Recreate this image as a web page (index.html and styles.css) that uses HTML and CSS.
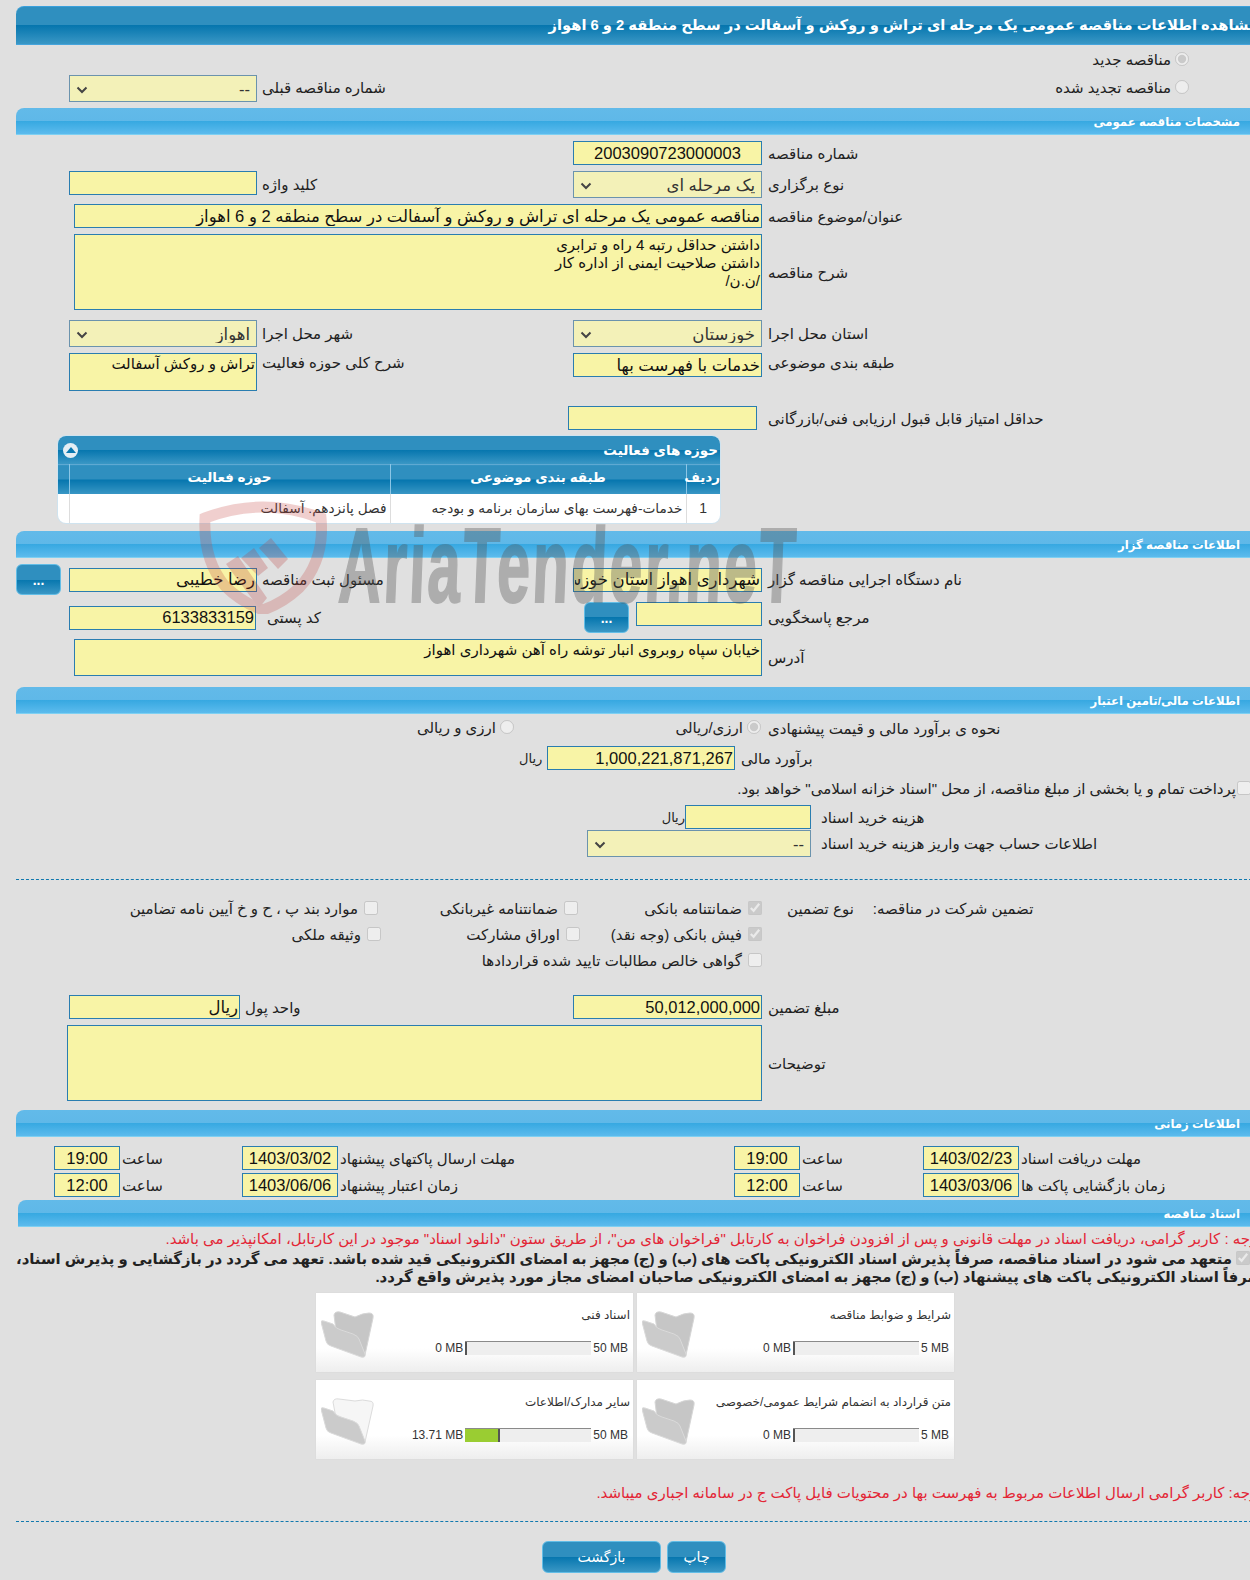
FILE: index.html
```html
<!DOCTYPE html>
<html lang="fa">
<head>
  <meta charset="UTF-8">
  <title>مشاهده اطلاعات مناقصه</title>
  <link rel="stylesheet" href="styles.css">
</head>
<body>
<div class="page">
  <h1 class="title-bar">مشاهده اطلاعات مناقصه عمومی یک مرحله ای تراش و روکش و آسفالت در سطح منطقه 2 و 6 اهواز</h1>

  <div class="row mt3 h24">
    <label class="choice c-d pr-radio"><input type="radio" name="kind" checked disabled>مناقصه جدید</label>
  </div>
  <div class="row mt3 h33">
    <select class="field c-a sel align-top" disabled><option>--</option></select>
    <span class="lbl c-b top-lbl">شماره مناقصه قبلی</span>
    <label class="choice c-d pr-radio top-lbl"><input type="radio" name="kind" disabled>مناقصه تجدید شده</label>
  </div>

  <h2 class="section-bar">مشخصات مناقصه عمومی</h2>

  <div class="row mt6">
    <input class="field c-c center" value="2003090723000003" readonly>
    <span class="lbl c-d">شماره مناقصه</span>
  </div>
  <div class="row mt6">
    <input class="field c-a align-top" readonly>
    <span class="lbl c-b">کلید واژه</span>
    <select class="field c-c sel" disabled><option>یک مرحله ای</option></select>
    <span class="lbl c-d">نوع برگزاری</span>
  </div>
  <div class="row mt6">
    <input class="field c-wide" dir="rtl" value="مناقصه عمومی یک مرحله ای تراش و روکش و آسفالت در سطح منطقه 2 و 6 اهواز" readonly>
    <span class="lbl c-d">عنوان/موضوع مناقصه</span>
  </div>
  <div class="row mt6">
    <textarea class="field c-wide area-lg" dir="rtl" readonly>داشتن حداقل رتبه 4 راه و ترابری
داشتن صلاحیت ایمنی از اداره کار
/ن.ن/</textarea>
    <span class="lbl c-d">شرح مناقصه</span>
  </div>
  <div class="row mt10">
    <select class="field c-a sel" disabled><option>اهواز</option></select>
    <span class="lbl c-b">شهر محل اجرا</span>
    <select class="field c-c sel" disabled><option>خوزستان</option></select>
    <span class="lbl c-d">استان محل اجرا</span>
  </div>
  <div class="row mt6">
    <textarea class="field c-a area-sm" dir="rtl" readonly>تراش و روکش آسفالت</textarea>
    <span class="lbl c-b top-lbl-sm">شرح کلی حوزه فعالیت</span>
    <input class="field c-c align-top" dir="rtl" value="خدمات با فهرست بها" readonly>
    <span class="lbl c-d top-lbl-sm">طبقه بندی موضوعی</span>
  </div>
  <div class="row mt15">
    <input class="field c-c shift-left" readonly>
    <span class="lbl c-d">حداقل امتیاز قابل قبول ارزیابی فنی/بازرگانی</span>
  </div>

  <div class="activity">
    <div class="activity-head">
      <span class="collapse-btn"><svg width="10" height="6" viewBox="0 0 10 6"><path d="M0 6 L5 0 L10 6 Z" fill="#0a78b0"/></svg></span>
      <span>حوزه های فعالیت</span>
    </div>
    <table class="activity-table" dir="rtl">
      <thead>
        <tr><th class="col-idx">ردیف</th><th class="col-cat">طبقه بندی موضوعی</th><th>حوزه فعالیت</th><th class="col-end"></th></tr>
      </thead>
      <tbody>
        <tr><td class="col-idx center num">1</td><td>خدمات-فهرست بهای سازمان برنامه و بودجه</td><td>فصل پانزدهم. آسفالت</td><td class="col-end"></td></tr>
      </tbody>
    </table>
  </div>

  <h2 class="section-bar mt8">اطلاعات مناقصه گزار</h2>

  <div class="row mt6 center-row">
    <button class="btn btn-dots c-z" type="button">...</button>
    <input class="field c-a" dir="rtl" value="رضا خطیبی" readonly>
    <span class="lbl c-b">مسئول ثبت مناقصه</span>
    <input class="field c-c" dir="rtl" value="شهرداری اهواز استان خوزستان" readonly>
    <span class="lbl c-d">نام دستگاه اجرایی مناقصه گزار</span>
  </div>
  <div class="row mt7 ref-row">
    <input class="field c-a num code-input" value="6133833159" readonly>
    <span class="lbl c-b pl-code">کد پستی</span>
    <div class="c-c ref-cell">
      <button class="btn btn-dots" type="button">...</button>
      <input class="field ref-input" readonly>
    </div>
    <span class="lbl c-d">مرجع پاسخگویی</span>
  </div>
  <div class="row mt6">
    <textarea class="field c-wide area-md" dir="rtl" readonly>خیابان سپاه روبروی انبار توشه راه آهن شهرداری اهواز</textarea>
    <span class="lbl c-d">آدرس</span>
  </div>

  <h2 class="section-bar mt11">اطلاعات مالی/تامین اعتبار</h2>

  <div class="row mt2 h24">
    <label class="choice c-b pr-second"><input type="radio" name="est" disabled>ارزی و ریالی</label>
    <label class="choice c-c pr-first"><input type="radio" name="est" checked disabled>ارزی/ریالی</label>
    <span class="lbl c-d">نحوه ی برآورد مالی و قیمت پیشنهادی</span>
  </div>
  <div class="flex-row estimate-row mt6">
    <span class="unit">ریال</span>
    <input class="field estimate-input num" value="1,000,221,871,267" readonly>
    <span class="lbl">برآورد مالی</span>
  </div>
  <label class="treasury-line"><input type="checkbox" disabled>پرداخت تمام و یا بخشی از مبلغ مناقصه، از محل "اسناد خزانه اسلامی" خواهد بود.</label>
  <div class="flex-row cost-row mt7">
    <span class="unit">ریال</span>
    <input class="field cost-input" readonly>
    <span class="lbl">هزینه خرید اسناد</span>
  </div>
  <div class="flex-row account-row mt1">
    <select class="field account-select sel" disabled><option>--</option></select>
    <span class="lbl">اطلاعات حساب جهت واریز هزینه خرید اسناد</span>
  </div>

  <hr class="dash mt22">

  <div class="guarantee">
    <label class="choice"><input type="checkbox" disabled>موارد بند پ ، ح و خ آیین نامه تضامین</label>
    <label class="choice"><input type="checkbox" disabled>ضمانتنامه غیربانکی</label>
    <label class="choice"><input type="checkbox" checked disabled>ضمانتنامه بانکی</label>
    <div class="guarantee-head"><span>نوع تضمین</span><span>تضمین شرکت در مناقصه:</span></div>
    <label class="choice push-3"><input type="checkbox" disabled>وثیقه ملکی</label>
    <label class="choice push-2"><input type="checkbox" disabled>اوراق مشارکت</label>
    <label class="choice"><input type="checkbox" checked disabled>فیش بانکی (وجه نقد)</label>
    <span></span>
    <span></span>
    <label class="choice span-two"><input type="checkbox" disabled>گواهی خالص مطالبات تایید شده قراردادها</label>
  </div>

  <div class="row mt21">
    <input class="field c-a unit-input" dir="rtl" value="ریال" readonly>
    <span class="lbl c-b pl-unit">واحد پول</span>
    <input class="field c-c num" value="50,012,000,000" readonly>
    <span class="lbl c-d">مبلغ تضمین</span>
  </div>
  <div class="row mt6">
    <textarea class="field c-notes area-lg" dir="rtl" readonly></textarea>
    <span class="lbl c-d">توضیحات</span>
  </div>

  <h2 class="section-bar mt9">اطلاعات زمانی</h2>

  <div class="time-row mt9">
    <input class="field center" value="19:00" readonly>
    <span class="lbl">ساعت</span>
    <input class="field center" value="1403/03/02" readonly>
    <span class="lbl">مهلت ارسال پاکتهای پیشنهاد</span>
    <input class="field center" value="19:00" readonly>
    <span class="lbl">ساعت</span>
    <input class="field center" value="1403/02/23" readonly>
    <span class="lbl">مهلت دریافت اسناد</span>
  </div>
  <div class="time-row mt3">
    <input class="field center" value="12:00" readonly>
    <span class="lbl">ساعت</span>
    <input class="field center" value="1403/06/06" readonly>
    <span class="lbl">زمان اعتبار پیشنهاد</span>
    <input class="field center" value="12:00" readonly>
    <span class="lbl">ساعت</span>
    <input class="field center" value="1403/03/06" readonly>
    <span class="lbl">زمان بازگشایی پاکت ها</span>
  </div>

  <h2 class="section-bar docs-bar">اسناد مناقصه</h2>

  <p class="notice red">توجه : کاربر گرامی، دریافت اسناد در مهلت قانونی و پس از افزودن فراخوان به کارتابل "فراخوان های من"، از طریق ستون "دانلود اسناد" موجود در این کارتابل، امکانپذیر می باشد.</p>
  <p class="notice pledge"><input type="checkbox" checked disabled>متعهد می شود در اسناد مناقصه، صرفاً پذیرش اسناد الکترونیکی پاکت های (ب) و (ج) مجهز به امضای الکترونیکی قید شده باشد. تعهد می گردد در بازگشایی و پذیرش اسناد،<br>صرفاً اسناد الکترونیکی پاکت های پیشنهاد (ب) و (ج) مجهز به امضای الکترونیکی صاحبان امضای مجاز مورد پذیرش واقع گردد.</p>

  <div class="doc-grid">
    <div class="doc-card">
      <svg class="folder" viewBox="0 0 54 48"><use href="#folder-icon"/></svg>
      <div class="doc-info">
        <div class="doc-name">اسناد فنی</div>
        <div class="doc-usage"><span>0 MB</span><div class="bar"><div class="bar-fill empty"></div></div><span>50 MB</span></div>
      </div>
    </div>
    <div class="doc-card">
      <svg class="folder" viewBox="0 0 54 48"><use href="#folder-icon"/></svg>
      <div class="doc-info">
        <div class="doc-name">شرایط و ضوابط مناقصه</div>
        <div class="doc-usage"><span>0 MB</span><div class="bar"><div class="bar-fill empty"></div></div><span>5 MB</span></div>
      </div>
    </div>
    <div class="doc-card">
      <svg class="folder" viewBox="0 0 54 48">
        <path d="M12 4 Q13 0 18 1 L34 3 Q42 1 48 3 Q53 3 52 8 L44 44 L15 20 Z" fill="#f6f6f6" stroke="#dcdcdc"/>
        <use href="#folder-front"/>
      </svg>
      <div class="doc-info">
        <div class="doc-name">سایر مدارک/اطلاعات</div>
        <div class="doc-usage"><span>13.71 MB</span><div class="bar"><div class="bar-fill" style="width:27.4%"></div></div><span>50 MB</span></div>
      </div>
    </div>
    <div class="doc-card">
      <svg class="folder" viewBox="0 0 54 48"><use href="#folder-icon"/></svg>
      <div class="doc-info">
        <div class="doc-name">متن قرارداد به انضمام شرایط عمومی/خصوصی</div>
        <div class="doc-usage"><span>0 MB</span><div class="bar"><div class="bar-fill empty"></div></div><span>5 MB</span></div>
      </div>
    </div>
  </div>

  <p class="notice red bottom-note">توجه: کاربر گرامی ارسال اطلاعات مربوط به فهرست بها در محتویات فایل پاکت ج در سامانه اجباری میباشد.</p>

  <hr class="dash mt20">

  <div class="actions">
    <button class="btn btn-back" type="button">بازگشت</button>
    <button class="btn btn-print" type="button">چاپ</button>
  </div>
</div>

<div class="watermark">
  <svg class="watermark-logo" viewBox="0 0 128 116" width="128" height="116">
    <path d="M6 20 Q64 -2 122 20 Q126 62 100 90 Q84 105 64 112 Q42 104 26 88 Q4 62 6 20 Z" fill="none" stroke="#c4443f" stroke-width="11"/>
    <path d="M60 50 L72 40 L89 61 L79 71 Z M42 60 L55 50 L69 70 L59 78 Z M27 66 L39 58 L68 100 L60 110 Z" fill="#b83a3a"/>
  </svg>
  <span class="watermark-text">AriaTender.neT</span>
</div>

<svg class="defs" width="0" height="0">
  <defs>
    <g id="folder-front">
      <path d="M0 11 Q0 9 3 10 L12 13 Q15 18 20 19 L32 23 Q37 25 38 28 L44 43 Q45 47 40 46 L10 35 Q6 34 5 30 Z" fill="#cbcbcb" stroke="#dadada"/>
    </g>
    <g id="folder-icon">
      <path d="M13 4 Q14 0 19 1 L34 6 Q42 2 48 2 Q53 2 52 7 L44 44 L15 20 Z" fill="#c6c6c6" stroke="#d6d6d6"/>
      <use href="#folder-front"/>
    </g>
  </defs>
</svg>
</body>
</html>
```

FILE: styles.css
```css
html, body {
  margin: 0;
  overflow: hidden;
}
body {
  position: relative;
  height: 1580px;
  background: #e0e0e0;
  font-family: "Liberation Sans", "DejaVu Sans", sans-serif;
  font-size: 15px;
  color: #222;
}
.page {
  width: 1246px;
  margin-left: 16px;
  padding-top: 6px;
}
.defs {
  position: absolute;
}

/* bars */
.title-bar, .activity-head, .btn, .activity-table th {
  background: linear-gradient(to bottom, #2f8fbf 0, #2f8fbf 50%, #0676ae 50%, #3a97c5 100%);
  color: #fff;
}
.title-bar {
  margin: 0;
  height: 39px;
  line-height: 37px;
  box-sizing: border-box;
  padding-right: 4px;
  direction: rtl;
  font-size: 14.7px;
  font-weight: bold;
  white-space: nowrap;
  border-top: 1px solid #3aa0dc;
  border-bottom: 1px solid #45a4dc;
  border-top-left-radius: 8px;
}
.section-bar {
  margin: 0;
  height: 27px;
  box-sizing: border-box;
  line-height: 28px;
  padding-right: 22px;
  direction: rtl;
  font-size: 11.7px;
  font-weight: bold;
  color: #fff;
  background: linear-gradient(to bottom, #62bae9 0, #5fb8e8 50%, #36a8e1 50%, #5cbbed 100%);
  border-bottom: 1px solid #7ed0f2;
  border-top-left-radius: 8px;
}
.docs-bar {
  margin: 3px 0 0 2px;
}

/* form rows */
.row {
  display: grid;
  grid-template-columns: 53px 188px 316px 189px 1fr;
  align-items: center;
}
.flex-row {
  display: flex;
  align-items: center;
}
.center-row {
  min-height: 31px;
}
.c-z { grid-column: 1; }
.c-a { grid-column: 2; }
.c-b { grid-column: 3; }
.c-c { grid-column: 4; }
.c-d { grid-column: 5; }
.c-wide { grid-column: 2 / 5; }
.c-notes { grid-column: 2 / 5; }

.lbl {
  direction: rtl;
  text-align: left;
  font-size: 15px;
  white-space: nowrap;
  padding-top: 1px;
}
.c-b.lbl { padding-left: 5px; }
.c-d.lbl { padding-left: 6px; }
.top-lbl { align-self: start; padding-top: 4px; }
.top-lbl-sm { align-self: start; }
.align-top { align-self: start; }
.lbl.pl-code { padding-left: 10px; }
.lbl.pl-unit { padding-left: 0; margin-left: -12px; }

.field {
  box-sizing: border-box;
  height: 24px;
  border: 1px solid #2a7db0;
  background: #f8f4a6;
  color: #111;
  font-family: inherit;
  font-size: 16.5px;
  padding: 0 1px;
  margin: 0;
  opacity: 1;
  border-radius: 0;
}
.num {
  text-align: right;
}
.center, .field.center {
  text-align: center;
}
.c-a.field, .c-c.field {
  width: 100%;
}
.c-wide.field {
  margin-left: 5px;
  width: calc(100% - 5px);
}
.c-notes.field {
  margin-left: -2px;
  width: calc(100% + 2px);
}
.sel {
  height: 27px;
  direction: rtl;
  appearance: none;
  background: #f3f1b8 url("data:image/svg+xml,%3Csvg xmlns='http://www.w3.org/2000/svg' width='12' height='8'%3E%3Cpath d='M1.5 1.5 L6 6 L10.5 1.5' fill='none' stroke='%23444' stroke-width='2'/%3E%3C/svg%3E") no-repeat 6px 10px;
  border-color: #6b93ad;
  font-size: 16.5px;
  padding: 0 6px 0 0;
  color: #333;
}
textarea.field {
  resize: none;
  font-size: 15px;
  line-height: 18px;
  padding-top: 1px;
  overflow: hidden;
}
.area-lg { height: 76px; }
.area-md { height: 37px; }
.area-sm { height: 38px; }
.field.shift-left {
  margin-left: -5px;
}
.c-a.code-input {
  width: 187px;
}
.c-a.unit-input {
  width: 171px;
}

/* radio and checkbox lines */
.choice {
  display: block;
  direction: rtl;
  font-size: 15px;
  white-space: nowrap;
}
.choice input, .treasury-line input, .pledge input {
  margin: 0 0 0 4px;
  width: 14px;
  height: 14px;
  vertical-align: -1px;
}
.pr-radio { padding-right: 73px; }
.pr-first { padding-right: 1px; }
.pr-second { padding-right: 59px; }
.push-2 { margin-right: -2px; }
.push-3 { margin-right: -3px; }
.treasury-line {
  display: block;
  direction: rtl;
  font-size: 15px;
  margin-top: 10px;
  padding-right: 11px;
  height: 18px;
  white-space: nowrap;
}
.treasury-line input {
  margin-left: 1px;
}
.estimate-row { margin-left: 503px; height: 24px; }
.unit { width: 28px; font-size: 13px; direction: rtl; text-align: left; }
.estimate-input { width: 188px; }
.estimate-row .lbl { padding-left: 6px; }
.cost-row { margin-left: 646px; height: 24px; }
.cost-row .unit { width: 23px; }
.cost-input { width: 126px; }
.cost-row .lbl, .account-row .lbl { padding-left: 10px; }
.account-row { margin-left: 571px; }
.account-select { width: 224px; }

/* activity table */
.activity {
  margin: 6px 0 0 42px;
  width: 662px;
  height: 87px;
  border-radius: 8px;
  overflow: hidden;
  background: #fff;
  box-shadow: 0 0 0 1px #cfe3ef;
}
.activity-head {
  display: flex;
  justify-content: space-between;
  align-items: center;
  height: 28px;
  padding: 0 2px 0 5px;
  font-size: 13.5px;
  font-weight: bold;
}
.collapse-btn {
  display: flex;
  align-items: center;
  justify-content: center;
  width: 15px;
  height: 15px;
  border-radius: 50%;
  background: #e4eef4;
}
.activity-table {
  width: 100%;
  border-collapse: collapse;
  table-layout: fixed;
}
.activity-table th {
  height: 29px;
  padding: 0 0 5px;
  box-sizing: border-box;
  font-size: 13.5px;
  border-left: 1px solid #8cc6e6;
  border-top: 1px solid #5fa9d2;
}
.activity-table td {
  height: 29px;
  padding: 0 3px;
  font-size: 13.7px;
  color: #333;
  border-left: 1px solid #ddd;
}
.col-idx { width: 34px; }
.col-cat { width: 296px; }
.activity-table .col-end { width: 11px; border-left: 0; }
.activity-table .num { font-size: 14px; }

/* buttons */
.btn {
  border: 1px solid #62bde6;
  border-radius: 6px;
  font-family: inherit;
  padding: 0;
  cursor: pointer;
}
.btn-dots {
  width: 45px;
  height: 31px;
  font-size: 14px;
  font-weight: bold;
}
.ref-row {
  min-height: 30px;
}
.ref-cell {
  display: flex;
  justify-content: flex-end;
  align-items: flex-start;
  gap: 7px;
  align-self: start;
}
.ref-input {
  width: 126px;
}

.dash {
  border: 0;
  border-top: 1px dashed #1078ae;
  margin-bottom: 0;
  margin-right: 0;
  margin-left: 0;
}

/* guarantee checkboxes */
.guarantee {
  display: grid;
  grid-template-columns: 362px 200px 184px 1fr;
  grid-auto-rows: 26px;
  align-items: center;
  margin-top: 16px;
}
.guarantee .choice input {
  margin-left: 6px;
}
.guarantee-head {
  display: flex;
  gap: 19px;
  padding-left: 25px;
  direction: ltr;
  font-size: 15px;
}
.guarantee-head span {
  direction: rtl;
}
.span-two {
  grid-column: 2 / 4;
}

/* time rows */
.time-row {
  display: grid;
  grid-template-columns: 66px 122px 96px 396px 66px 123px 96px 1fr;
  margin-left: 38px;
  align-items: center;
  height: 24px;
}
.time-row .lbl {
  padding-left: 2px;
}
.time-row .field {
  width: 100%;
}

/* notices */
.notice {
  direction: rtl;
  margin: 0;
  white-space: nowrap;
}
.red {
  color: #e32636;
  font-size: 15px;
  margin-top: 3px;
  line-height: 17px;
}
.pledge {
  font-weight: bold;
  font-size: 14.9px;
  line-height: 18px;
  margin-top: 3px;
  color: #222;
}
.pledge input {
  margin: 0 12px 0 4px;
}
.bottom-note {
  margin-top: 25px;
}

/* documents */
.doc-grid {
  display: grid;
  grid-template-columns: 317px 317px;
  grid-auto-rows: 79px;
  gap: 8px 4px;
  margin: 7px 0 0 300px;
}
.doc-card {
  display: flex;
  background: linear-gradient(to bottom, #fff 70%, #eee 100%);
  box-shadow: 0 0 1px #ccc;
}
.folder {
  width: 54px;
  height: 48px;
  margin: 18px 0 0 5px;
  flex: none;
}
.doc-info {
  flex: 1;
  padding: 15px 5px 0 0;
  font-size: 12px;
  color: #333;
}
.doc-name {
  direction: rtl;
  height: 32px;
  margin-right: -2px;
  white-space: nowrap;
}
.doc-usage {
  display: flex;
  justify-content: flex-end;
  align-items: center;
  gap: 2px;
  height: 15px;
}
.bar {
  width: 126px;
  height: 14px;
  background: #eee;
  border-top: 1px solid #8a8a8a;
  box-sizing: border-box;
}
.bar-fill {
  height: 100%;
  background: #9acd32;
  border-right: 2px solid #555;
  box-sizing: border-box;
}
.bar-fill.empty {
  width: 2px;
  border-right: 0;
  background: #555;
}

.actions {
  display: flex;
  gap: 6px;
  margin: 19px 0 0 526px;
}
.btn-back {
  width: 119px;
  height: 32px;
  font-size: 14px;
}
.btn-print {
  width: 59px;
  height: 32px;
  font-size: 14px;
}

/* utility spacing */
.mt1 { margin-top: 1px; }
.mt2 { margin-top: 2px; }
.mt3 { margin-top: 3px; }
.mt6 { margin-top: 6px; }
.mt7 { margin-top: 7px; }
.mt8 { margin-top: 8px; }
.mt9 { margin-top: 9px; }
.mt10 { margin-top: 10px; }
.mt11 { margin-top: 11px; }
.mt15 { margin-top: 15px; }
.mt20 { margin-top: 20px; }
.mt21 { margin-top: 21px; }
.mt22 { margin-top: 22px; }
.h24 { height: 24px; }
.h33 { height: 33px; }

/* site watermark, drawn over the form */
.watermark {
  position: absolute;
  left: 199px;
  top: 498px;
  display: flex;
  align-items: flex-end;
  pointer-events: none;
}
.watermark-logo {
  opacity: .25;
  flex: none;
}
.watermark-text {
  display: block;
  margin: 0 0 1px 10px;
  font-family: "Liberation Sans", sans-serif;
  font-size: 106px;
  line-height: 96px;
  font-weight: bold;
  letter-spacing: 4px;
  color: #555;
  opacity: .36;
  -webkit-text-stroke: 2px #555;
  transform: scaleX(.56) skewX(-4deg);
  transform-origin: left bottom;
  white-space: nowrap;
}
```
